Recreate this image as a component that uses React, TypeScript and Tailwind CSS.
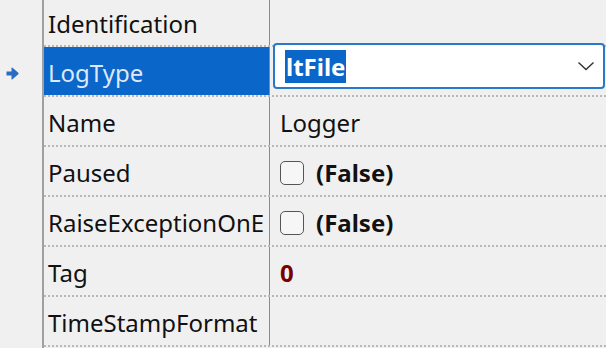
import React from "react";

const font = { fontFamily: '"Noto Sans", "Open Sans", sans-serif' };

function Arrow() {
  return (
    <svg width="13" height="13" viewBox="0 0 13 13">
      <path d="M0.5 4.5 H5.5 V1 Q5.5 0 6.5 0.8 L12.3 5.8 Q13 6.5 12.3 7.2 L6.5 12.2 Q5.5 13 5.5 12 V8.5 H0.5 Z" fill="#2a6cc0" />
    </svg>
  );
}

function Chevron() {
  return (
    <svg width="18" height="10" viewBox="0 0 18 10">
      <path d="M1.5 1.5 L9 8.5 L16.5 1.5" fill="none" stroke="#333" strokeWidth="1.4" />
    </svg>
  );
}

function Checkbox() {
  return <div className="w-[24px] h-[24px] border-[1.5px] border-[#555] rounded-[5px] bg-[#f6f6f6]" />;
}

type Row = { name: string; value?: React.ReactNode; selected?: boolean; h?: string };

export default function App() {
  const rows: Row[] = [
    { name: "Identification", h: "h-[47px]" },
    { name: "LogType", selected: true },
    { name: "Name", value: <span className="text-[#111]">Logger</span> },
    {
      name: "Paused",
      value: (
        <div className="flex items-center gap-[12px]">
          <Checkbox />
          <span className="font-bold text-[#111]">(False)</span>
        </div>
      ),
    },
    {
      name: "RaiseExceptionOnE",
      value: (
        <div className="flex items-center gap-[12px]">
          <Checkbox />
          <span className="font-bold text-[#111]">(False)</span>
        </div>
      ),
    },
    { name: "Tag", value: <span className="font-bold text-[#7a0000]">0</span> },
    { name: "TimeStampFormat" },
  ];

  return (
    <div className="w-[606px] h-[348px] bg-[#f0f0f0] overflow-hidden flex text-[24px]" style={font}>
      <div className="w-[42px] shrink-0 flex flex-col">
        {rows.map((r, i) => (
          <div key={i} className={`${r.h ?? "h-[50px]"} flex items-center pl-[6px] pt-[2px] shrink-0`}>
            {r.selected ? <Arrow /> : null}
          </div>
        ))}
      </div>
      <div className="flex-1 flex flex-col border-l-2 border-[#a0a0a0]">
        {rows.map((r, i) => (
          <div
            key={i}
            className={`${r.h ?? "h-[50px]"} shrink-0 flex border-b-2 border-dotted border-[#b8b8b8]`}
          >
            <div
              className={`w-[226px] shrink-0 overflow-hidden whitespace-nowrap flex items-center pl-[4px] pt-[3px] border-r border-[#8a8a8a] ${
                r.selected ? "bg-[#0b66c9] text-[#dde9f7]" : "text-[#111]"
              }`}
            >
              {r.name}
            </div>
            <div className="flex-1 flex items-center pl-[10px] pt-[3px] relative">
              {r.selected ? (
                <div className="absolute left-[3px] right-[1px] top-[-4px] bottom-[6px] bg-white border-2 border-[#2a78c8] rounded-[4px] flex items-center pl-[10px] pr-[8px]">
                  <span className="bg-[#0b66c9] text-white font-bold leading-[33px] px-[1px]">ltFile</span>
                  <div className="flex-1" />
                  <Chevron />
                </div>
              ) : (
                r.value
              )}
            </div>
          </div>
        ))}
      </div>
    </div>
  );
}
